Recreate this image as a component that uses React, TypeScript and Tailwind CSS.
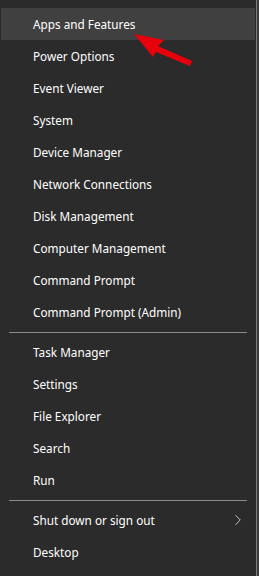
import { ChevronRight } from "lucide-react";

const groups = [
  [
    "Apps and Features",
    "Power Options",
    "Event Viewer",
    "System",
    "Device Manager",
    "Network Connections",
    "Disk Management",
    "Computer Management",
    "Command Prompt",
    "Command Prompt (Admin)",
  ],
  ["Task Manager", "Settings", "File Explorer", "Search", "Run"],
  ["Shut down or sign out", "Desktop"],
];

export default function App() {
  return (
    <div
      className="relative flex w-[259px] h-[576px] bg-[#2b2b2b] overflow-hidden"
      style={{ fontFamily: '"Noto Sans", "Open Sans", sans-serif' }}
    >
      <div className="w-[256px] py-2 flex flex-col">
        {groups.map((items, gi) => (
          <div key={gi} className="flex flex-col">
            {gi > 0 && (
              <div className="h-2 flex items-center pl-[9px] pr-[9px]">
                <div className="w-full h-px bg-[#8a8a8a]" />
              </div>
            )}
            {items.map((label, i) => {
              const active = gi === 0 && i === 0;
              return (
                <div
                  key={label}
                  className={`mx-px h-8 flex items-center justify-between pl-[32px] pr-[8px] text-[11.75px] text-white ${
                    active ? "bg-[#404040]" : ""
                  }`}
                >
                  <span className="leading-none pt-px">{label}</span>
                  {label === "Shut down or sign out" && (
                    <ChevronRight className="w-[18px] h-[18px] text-[#d8d8d8]" strokeWidth={1.2} />
                  )}
                </div>
              );
            })}
          </div>
        ))}
      </div>
      <div className="w-px h-full bg-[#7f7f7f]" />
      <div className="w-[2px] h-full bg-[#3a3a3a]" />

      <svg
        className="absolute left-0 top-0 pointer-events-none"
        width="259"
        height="80"
        viewBox="0 0 259 80"
      >
        <polygon
          points="134,34 164,40 158,46 192,61 190,66 156,52 153,57"
          fill="#e8000b"
        />
      </svg>
    </div>
  );
}
